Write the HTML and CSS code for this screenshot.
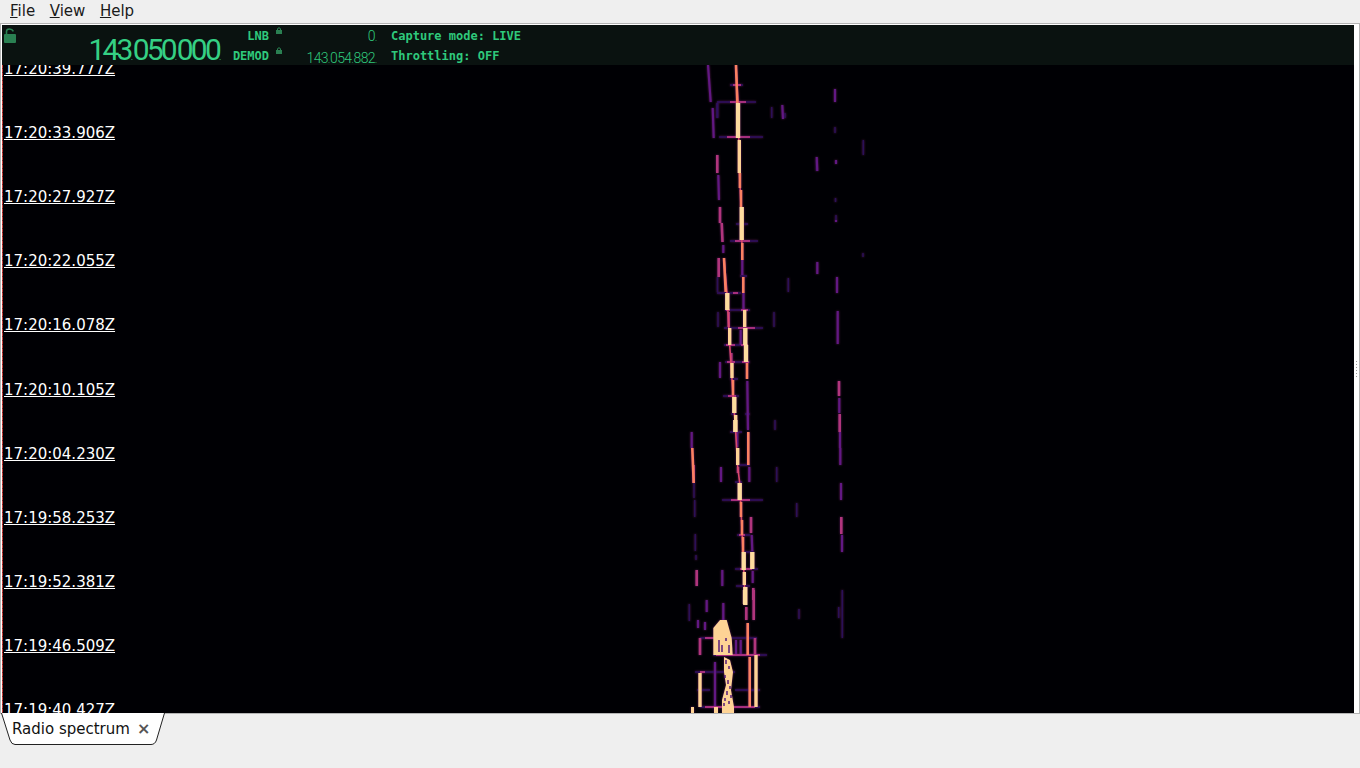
FILE: index.html
```html
<!DOCTYPE html>
<html lang="en">
<head>
<meta charset="utf-8">
<title>Radio spectrum</title>
<link rel="stylesheet" href="styles.css">
</head>
<body>
<nav class="menubar">
  <span class="menu"><u>F</u>ile</span>
  <span class="menu"><u>V</u>iew</span>
  <span class="menu"><u>H</u>elp</span>
</nav>
<main class="frame">
  <div class="view">
    <header class="status">
      <svg class="lock-big" viewBox="0 0 12 15"><path class="lock-shackle" d="M2.500 7V3.600C2.500 1.900 3.900 1 5.500 1S8.600 1.800 9.400 3.400"/><rect class="lock-body" x="0" y="6" width="12" height="9" rx="1"/></svg>
      <div class="lcd-big">143<i>.</i>050<i>.</i>000<i>.</i></div>
      <div class="labels"><span>LNB</span><span>DEMOD</span></div>
      <div class="mini-locks">
        <svg class="lock-mini" viewBox="0 0 6 7"><path class="lock-shackle-mini" d="M1.500 3V2C1.500 .5 4.500 .5 4.500 2V3"/><rect class="lock-body" x="0" y="3" width="6" height="4"/></svg>
        <svg class="lock-mini" viewBox="0 0 6 7"><path class="lock-shackle-mini" d="M1.500 3V2C1.500 .5 4.500 .5 4.500 2V3"/><rect class="lock-body" x="0" y="3" width="6" height="4"/></svg>
      </div>
      <div class="values"><span class="lcd-small">0<i>.</i></span><span class="lcd-small">143<i>.</i>054<i>.</i>882<i>.</i></span></div>
      <div class="info"><span>Capture mode: LIVE</span><span>Throttling: OFF</span></div>
    </header>
    <section class="canvas">
      <svg class="waterfall" viewBox="2 65 1352 648" preserveAspectRatio="none">
        <g class="s-faint">
          <path d="M717.700 103V118M771.700 107V118M835 127V133M863.300 140V155M836 215V220M835.500 198V202M717.500 277V292M788.300 278V292M774 312V327M863 253V257M718 312V327M775 420V430M776.700 467V482M694 483V498M694.700 500V517M695.300 534V551M796.700 503V517M799 609V619M842.300 590V638M838.700 607V618M689.300 604V621M785 113V118M816.500 160V171M696 555V560"/>
        </g>
        <g class="t-dim">
          <path d="M717 102H756M719 137H763M730 241H758M717 293H741M724 328H763M724 345H748M725 310H750M725 362H750M723 396H739M722 500H763M735 569H758M736 586H750M737 535H750M700 638H757M713 655H767M695 672H735M697 690H710M735 690H760M700 707H760M730 85H743M736 224H748M740 276H747M730 379H738M731 414H736M745 414H750M730 432H742M738 465H750M735 482H742M743 552H754M702 707H757M717 103V118"/>
        </g>
        <g class="s-purple">
          <path d="M708 65L710.700 102M712.700 108L713.700 138M718.300 175L719 200M835 89V102M782.300 105L783 119M816.700 157L817.300 171M817.300 262V274M837 277V293M837.700 311V344M720 362V378M747.300 381L748 430M839.300 398V413M840 432V448M840.300 448V465M841 483V500M842 535V552M737.300 432V447M749.300 467V482M751.700 535L752.300 551M752.700 571V583M721 467V482M722.300 570V586M691.700 432V448M723.300 603V620M740.700 330V345M715 662V707M706.700 600V612M742.300 260V275M743.500 293V310M723.300 245V253M736 640V655M740.700 640V655M836 220V222M836 160V164M698 620V628M705 622V630"/>
        </g>
        <g class="s-magenta">
          <path d="M717.300 155V173M720 207V223M721.700 223L722.500 242M718.700 258V277M728.700 312V327M731.300 353V362M839 381V396M839.700 414V432M839.700 420V432M841.300 517V534M738 467V473M751 517V533M753.300 588V600M753.700 590V620M696.700 570V586M746.300 607V620M755 638V655M700 638V655M693.700 465V483"/>
        </g>
        <g class="t-bright">
          <path d="M730 102H746M727 137H750M735 241H750M733 85H741M733 293H738M738 328H755M726 345H735M741 345H748M727 362H735M742 362H749M728 396H736M731 500H750M740 569H752M739 535H745M705 638H725M716 655H760M700 672H705M705 707H755M726 310H730M741 310H748"/>
        </g>
        <g class="s-base">
          <path d="M736 65L738 103L739.500 173L741 207L742.300 260M724 258L727 293L729.700 345L733 395L735.700 432L737.500 465L739.700 483L743 552L745.300 605"/>
        </g>
        <g class="s-orange">
          <path d="M736 65L737.300 103M739.900 173V188M741 190V207M742.300 243V260M724 258L725.700 292M733 380V395M741 502V517M742 520V535M743 537V552M747.700 623V655M749.700 657V707M748.300 432V465M692.300 448L693.700 483M747 363V379M743.300 277V293"/>
        </g>
        <g class="s-pale-3">
          <path d="M739.300 140V173M744.700 310V327M729.700 328V345M732 363V378M735.700 415V432M737.700 448V465M744.300 572V585M700 673V707M756 655V707"/>
        </g>
        <g class="s-pale-4">
          <path d="M738 103V138M741.700 207V240M745.300 328V345M746 345V362M727.300 293V310M734.300 397V413M739.700 483V500M743.700 552V570M745.300 587V605M752.300 552V569M735.300 420V432M745 590V604"/>
        </g>
        <path class="blob" d="M720 620L726.700 620L731.700 638L732.700 655L713.300 655L713.300 628Z"/>
        <path class="blob" d="M724 657L730 660L733 672L731 690L734 707V713H722V700L726 685L724 672Z"/>
        <g class="speckle-dark">
          <path d="M719 640V652M722 645V652M726 638V641M729 645V653M726 660V664M729 666V669M725 675V678M728 680V684M730 686V689M727 691V695M731 695V698M725 698V701M729 701V704M724 703V706"/>
        </g>
        <path class="blob" d="M691 707H694V713H691ZM714 707H718V713H714Z"/>
      </svg>
      <div class="red-line"></div>
      <div class="times">
        <div class="time"><span>17:20:39.777Z</span></div>
        <div class="time"><span>17:20:33.906Z</span></div>
        <div class="time"><span>17:20:27.927Z</span></div>
        <div class="time"><span>17:20:22.055Z</span></div>
        <div class="time"><span>17:20:16.078Z</span></div>
        <div class="time"><span>17:20:10.105Z</span></div>
        <div class="time"><span>17:20:04.230Z</span></div>
        <div class="time"><span>17:19:58.253Z</span></div>
        <div class="time"><span>17:19:52.381Z</span></div>
        <div class="time"><span>17:19:46.509Z</span></div>
        <div class="time"><span>17:19:40.427Z</span></div>
      </div>
    </section>
  </div>
  <div class="splitter"><b></b><b></b><b></b><b></b><b></b><b></b></div>
</main>
<footer class="tabbar">
  <div class="tab">
    <svg class="tab-shape" viewBox="0 0 166 33"><path class="tab-path" d="M1.500 0L10 27Q11.500 31.500 15 31.500H151Q155 31.500 156.500 27L164.500 0"/></svg>
    <span class="tab-label">Radio spectrum</span>
    <span class="tab-close">×</span>
  </div>
</footer>
</body>
</html>
```
FILE: styles.css
```css
* { box-sizing: border-box; }
html, body { margin: 0; height: 100%; }
body {
  width: 1360px;
  height: 768px;
  overflow: hidden;
  display: flex;
  flex-direction: column;
  background: #efefef;
  font-family: "DejaVu Sans", sans-serif;
  font-size: 15px;
  color: #1a1a1a;
}
.menubar {
  height: 23px;
  flex: none;
  display: flex;
  align-items: center;
  gap: 14.6px;
  padding: 0 0 2px 10px;
  background: #efefef;
}
.frame {
  flex: 1;
  min-height: 0;
  display: flex;
  background: #fff;
  border: 1px solid #b4b4b4;
  border-bottom: 0;
  padding: 1px 0 0 1px;
}
.view {
  flex: 1;
  min-width: 0;
  display: flex;
  flex-direction: column;
}
.splitter {
  width: 5px;
  flex: none;
  display: flex;
  flex-direction: column;
  align-items: center;
  justify-content: center;
  gap: 2px;
}
.splitter b {
  width: 1px;
  height: 1px;
  background: #999;
}
.status {
  height: 40px;
  flex: none;
  display: flex;
  background: #0a1210;
  color: #2fc97c;
  position: relative;
  font-family: "DejaVu Sans Mono", monospace;
  font-size: 12px;
  font-weight: 700;
}
.lock-big {
  width: 12px;
  height: 15px;
  margin: 3px 0 0 2px;
  flex: none;
}
.lock-shackle { fill: none; stroke: #2a8052; stroke-width: 1.6; }
.lock-shackle-mini { fill: none; stroke: #2a8052; stroke-width: 1; }
.lock-body { fill: #2a8052; }
.lcd-big {
  width: 208px;
  flex: none;
  font-family: Roboto, sans-serif;
  font-weight: 400;
  font-size: 30px;
  line-height: 34px;
  padding-top: 8px;
  color: #35d084;
  text-align: right;
  letter-spacing: -2.8px;
  white-space: nowrap;
  padding-right: 3px;
}
.lcd-big i, .lcd-small i {
  font-style: normal;
  display: inline-block;
  font-size: 9px;
  letter-spacing: 0;
  width: 2px;
}
.labels {
  width: 45px;
  flex: none;
  display: flex;
  flex-direction: column;
  align-items: flex-end;
  padding-top: 4px;
  gap: 6px;
  line-height: 14px;
}
.mini-locks {
  width: 6px;
  flex: none;
  margin-left: 7px;
  display: flex;
  flex-direction: column;
  gap: 13px;
  padding-top: 2px;
}
.lock-mini { width: 6px; height: 7px; display: block; }
.values {
  width: 95px;
  flex: none;
  display: flex;
  flex-direction: column;
  align-items: flex-end;
  padding-top: 3px;
  gap: 3px;
}
.lcd-small {
  font-family: Roboto, sans-serif;
  font-weight: 300;
  font-size: 14px;
  line-height: 17px;
  letter-spacing: -0.6px;
}
.info {
  margin-left: 14px;
  display: flex;
  flex-direction: column;
  padding-top: 4px;
  gap: 6px;
  line-height: 14px;
}
.canvas {
  flex: 1;
  min-height: 0;
  position: relative;
  overflow: hidden;
  background: #000004;
}
.waterfall {
  position: absolute;
  inset: 0;
  width: 100%;
  height: 100%;
  filter: blur(0.55px) drop-shadow(0 0 1.2px rgba(130, 35, 125, 0.7));
}
.waterfall g { fill: none; }
.s-faint { stroke: #2a1058; stroke-width: 1.5; }
.s-purple { stroke: #611883; stroke-width: 2.2; }
.s-magenta { stroke: #b0357c; stroke-width: 2.6; }
.s-base { stroke: #d8496c; stroke-width: 1.6; }
.s-orange { stroke: #fb8062; stroke-width: 2.6; }
.s-pale-3 { stroke: #fed395; stroke-width: 3.4; }
.s-pale-4 { stroke: #fedc9f; stroke-width: 4.4; }
.t-dim { stroke: #2e0f62; stroke-width: 1.5; }
.t-bright { stroke: #a62f7e; stroke-width: 1.8; }
.blob { fill: #fed395; }
.speckle-dark { stroke: #4a1078; stroke-width: 1.4; }
.red-line {
  position: absolute;
  left: 0;
  top: 0;
  bottom: 0;
  width: 1px;
  background: repeating-linear-gradient(#c8403c 0 3px, #7a2a2a 3px 4px);
}
.times {
  position: absolute;
  left: 2px;
  top: -28px;
  display: flex;
  flex-direction: column;
  color: #fff;
  text-decoration: underline;
}
.time {
  height: 64.1px;
  flex: none;
  display: flex;
  align-items: center;
}
.tabbar {
  height: 55px;
  flex: none;
  border-top: 1px solid #b4b4b4;
  background: #efefef;
}
.tab {
  position: relative;
  width: 166px;
  height: 32px;
  margin-top: -1px;
  display: flex;
  align-items: center;
  padding: 0 0 1px 12px;
}
.tab-shape {
  position: absolute;
  left: 0;
  top: 0;
  width: 166px;
  height: 33px;
}
.tab-path { fill: #fff; stroke: #222; stroke-width: 1; }
.tab-label { position: relative; color: #111; }
.tab-close {
  position: relative;
  margin-left: 7px;
  font-size: 16px;
  font-weight: 700;
  color: #555;
}
```
